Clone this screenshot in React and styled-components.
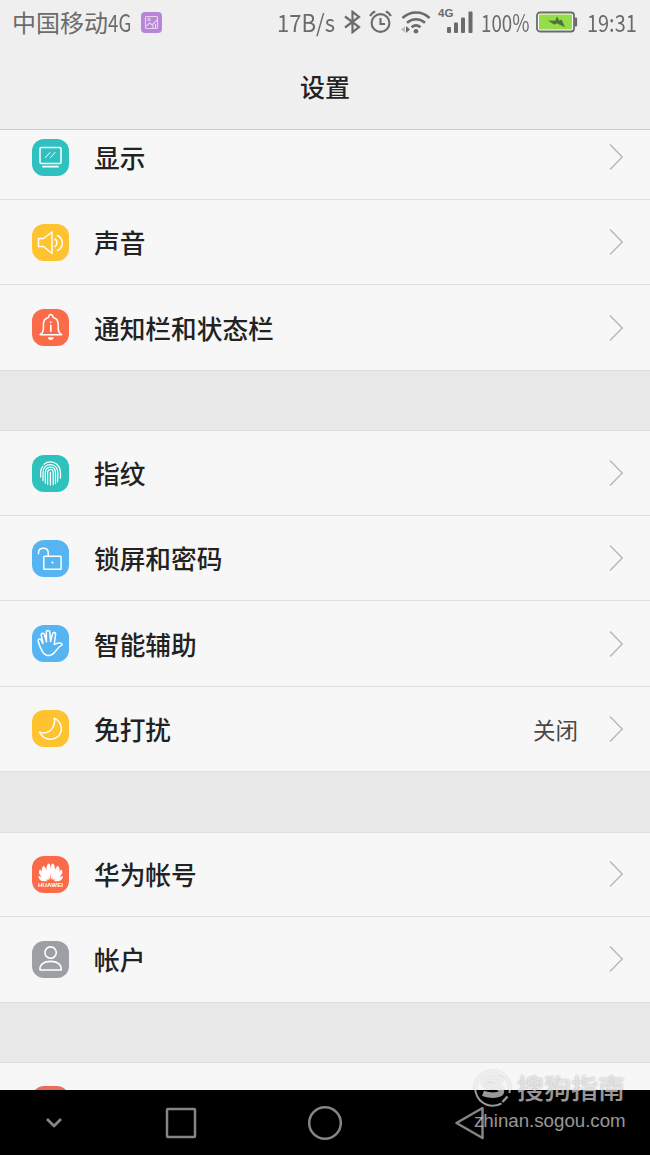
import React from "react";
import styled, { createGlobalStyle } from "styled-components";

const GlobalStyle = createGlobalStyle`
  * {
    box-sizing: border-box;
  }

  body {
    margin: 0;
    background: #000;
    font-family: "Noto Sans CJK SC", sans-serif;
  }

  svg {
    display: block;
    flex: none;
  }
`;

const Phone = styled.div`
  position: relative;
  display: flex;
  flex-direction: column;
  width: 650px;
  height: 1155px;
  overflow: hidden;
  background: #e8e8e8;
`;

const Header = styled.header`
  flex: none;
  height: 130px;
  background: #efefef;
  border-bottom: 1px solid #cbcbcb;
`;

const StatusBar = styled.div`
  display: flex;
  align-items: center;
  height: 44px;
  padding: 0 14px 0 12px;
  color: #6b6b6b;
`;

const StatusItem = styled.div`
  flex: none;
  width: ${props => props.$width}px;
  margin-left: ${props => props.$gap || 0}px;
`;

const StatusText = styled.span`
  display: block;
  width: max-content;
  font-size: 24px;
  line-height: 42px;
  white-space: nowrap;
  transform: scaleX(${props => props.$squeeze || 1});
  transform-origin: left center;
`;

const Spacer = styled.div`
  flex: 1;
`;

const Title = styled.h1`
  margin: 0;
  color: #222;
  font-size: 25px;
  font-weight: 500;
  line-height: 84px;
  text-align: center;
`;

const Viewport = styled.main`
  flex: none;
  height: 960px;
  overflow: hidden;
`;

const List = styled.div`
  display: flex;
  flex-direction: column;
  gap: 59.5px;
  margin-top: -15.4px;
`;

const Group = styled.section`
  background: #f7f7f7;
  border-top: 1px solid #dedede;
`;

const Row = styled.div`
  display: flex;
  align-items: center;
  height: 85.45px;
  padding: 0 26px 0 32px;
  border-bottom: 1px solid #dedede;

  &:first-child {
    height: 84.45px;
  }
`;

const Tile = styled.div`
  display: flex;
  flex: none;
  width: 37px;
  height: 37px;
  border-radius: 12px;
  background: ${props => props.$color};
`;

const Label = styled.span`
  flex: 1;
  margin-left: 25px;
  color: #222;
  font-size: 25.7px;
  font-weight: 500;
  line-height: 36px;
`;

const Value = styled.span`
  margin-right: 30px;
  color: #484848;
  font-size: 22.5px;
`;

const NavBar = styled.nav`
  display: grid;
  flex: none;
  grid-template-columns: 108px 145px 144px 145px 108px;
  align-items: center;
  justify-items: center;
  height: 65px;
  background: #000;
`;

const Watermark = styled.div`
  position: absolute;
  right: 24px;
  bottom: 21px;
  width: 152px;
  color: rgba(255, 255, 255, 0.6);
`;

const Brand = styled.div`
  display: flex;
  align-items: center;
  gap: 5px;
  height: 41px;
  font-size: 27px;
  font-weight: 500;
  white-space: nowrap;
  text-shadow: 0 0 2px rgba(0, 0, 0, 0.32);

  svg {
    filter: drop-shadow(0 0 1px rgba(0, 0, 0, 0.32));
  }
`;

const Site = styled.div`
  font-family: "Liberation Sans", Arial, sans-serif;
  font-size: 18.7px;
  line-height: 26px;
  white-space: nowrap;
`;

const drawings = {
  display: (
    <>
      <rect x="8" y="8.5" width="21" height="16" rx="1.3" />
      <path d="M11 27.6h15" strokeWidth="1.8" />
      <path d="M13.5 18.5l4.5-5M18.5 18.5l4.5-5" strokeWidth="1" />
    </>
  ),
  sound: (
    <>
      <path d="M6.5 14.5h5l8.5-6.5v21.5l-8.5-7h-5z" />
      <path d="M23 15c2.6 1.7 2.6 6 0 7.7M25.5 11.5c6.4 3.3 6.4 11.8 0 15" />
    </>
  ),
  bell: (
    <>
      <path d="M8 25.7h21.6c-2.6-1.7-3.4-3.3-3.4-6v-4.2c0-3.9-1.8-6.2-5.1-7-.3-2.1-1.1-3-2.3-3s-2 .9-2.3 3c-3.3.8-5.1 3.1-5.1 7v4.2c0 2.7-.8 4.3-3.4 6z" />
      <path d="M18.8 16.4v5.8" strokeWidth="1.6" />
      <circle cx="18.8" cy="13.2" r=".9" fill="#fff" stroke="none" />
      <path d="M15.9 28.3h5.8c-.2 1.8-1.4 2.7-2.9 2.7s-2.7-.9-2.9-2.7z" fill="#fff" stroke="none" />
    </>
  ),
  fingerprint: (
    <g strokeWidth="1.25">
      <path d="M12 9.3c5-4 12-2.7 15 2.6 1.8 3.4 1.7 7 1.5 11.2" />
      <path d="M8.6 22v-4.8c0-2.2.7-4.1 2.1-5.9M11 25.5v-7.8c0-5 3.1-8.2 7.5-8.2s7.3 3.5 7.3 8.2c.2 3.3 0 6-.3 9" />
      <path d="M13.3 28v-10c0-3.8 2-6 5.2-6s5 2.3 5 6v10.5" />
      <path d="M15.6 29.3V18c0-2.3 1-3.7 2.9-3.7s2.7 1.5 2.7 3.7v11.5M18.4 17.3v12.8" />
    </g>
  ),
  lock: (
    <>
      <rect x="11.8" y="16.2" width="17.3" height="13" rx=".8" />
      <path d="M16.2 16v-3c0-2.8-2-4.7-4.8-4.7-2.9 0-4.9 1.8-4.9 4.7v.7" />
      <circle cx="20.5" cy="22.6" r="1.1" fill="#fff" stroke="none" />
    </>
  ),
  hand: (
    <path
      d="M9.3 24.3C7.8 21.8 7.1 18.6 6.2 16.4c-.8-2.3 2-3.4 3-1.2l1.8 3.2-1.7-8c-.5-2.6 2.6-3.1 3.2-.7l2 7-.2-9.2c0-2.6 3.3-2.7 3.6-.1l.7 9 1.9-7.3c.6-2.5 3.5-1.9 3 .7l-1.3 9.7c1.8-.7 3.3-1.5 5-1.5 1.4 0 2.7.6 3 1.9-3.6 1.4-5.1 4.3-7.1 6.9-4.2 5.6-11.2 4.8-13.8-2.5z"
      strokeWidth="1.5"
    />
  ),
  moon: (
    <path d="M22.3 8.2c8 4.1 9.1 13.1 3.8 18.1-5.4 5.1-15 3.5-18.5-4 5 1.4 9.6-.1 12.2-3.4 2.5-3.3 3.3-6.9 2.5-10.7z" />
  ),
  huawei: (
    <>
      <g fill="#fff" stroke="none">
        <path d="M18 23.8C13.8 17.9 13.2 8.7 16.8 7.4c2.2-.4 2.4 8.4 1.2 16.4zM19.4 23.8c-1.2-8-1-16.8 1.2-16.4 3.6 1.3 3 10.5-1.2 16.4z" />
        <path d="M17 24C9.9 19.3 7.7 13 11.7 9.8c2.5 1.9 4.9 8.7 5.3 14.2zM20.4 24c.4-5.5 2.8-12.3 5.3-14.2 4 3.2 1.8 9.5-5.3 14.2z" />
        <path d="M16.2 24.3C8.6 21.8 5.4 17.4 7.8 13.6c3.4 2.2 6.8 6.2 8.4 10.7zM21.2 24.3c1.6-4.5 5-8.5 8.4-10.7 2.4 3.8-.8 8.2-8.4 10.7zM15.5 24.9c-5.5 1.4-8.7-.4-9.2-5 3.7.8 6.8 2.5 9.2 5zM21.9 24.9c2.4-2.5 5.5-4.2 9.2-5-.5 4.6-3.7 6.4-9.2 5z" />
      </g>
      <text x="18.6" y="30.8" textAnchor="middle" textLength="25" lengthAdjust="spacingAndGlyphs" fill="#fff" stroke="none" fontFamily="Liberation Sans, sans-serif" fontSize="5" fontWeight="700">HUAWEI</text>
    </>
  ),
  account: (
    <g strokeWidth="1.6">
      <circle cx="18.6" cy="11.6" r="5.7" />
      <path d="M8 29c-.5-5.5 3.7-8.6 10.6-8.6S29.7 23.5 29.2 29z" />
    </g>
  )
};

const groups = [
  [
    { label: "显示", icon: "display", color: "#2fc1c0" },
    { label: "声音", icon: "sound", color: "#ffc32f" },
    { label: "通知栏和状态栏", icon: "bell", color: "#fb6a49" }
  ],
  [
    { label: "指纹", icon: "fingerprint", color: "#2fc1bb" },
    { label: "锁屏和密码", icon: "lock", color: "#56b4f3" },
    { label: "智能辅助", icon: "hand", color: "#56b4f3" },
    { label: "免打扰", icon: "moon", color: "#ffc32f", value: "关闭" }
  ],
  [
    { label: "华为帐号", icon: "huawei", color: "#fb6a49" },
    { label: "帐户", icon: "account", color: "#9c9fa3" }
  ],
  [{ label: "", color: "#e96d57" }]
];

function SettingRow({ item }) {
  return (
    <Row>
      <Tile $color={item.color}>
        <svg width="37" height="37" viewBox="0 0 37 37" fill="none" stroke="#fff" strokeWidth="1.5" strokeLinejoin="round" strokeLinecap="round">
          {drawings[item.icon]}
        </svg>
      </Tile>
      <Label>{item.label}</Label>
      {item.value && <Value>{item.value}</Value>}
      <svg width="16" height="28" viewBox="0 0 16 28" fill="none" stroke="#b9b9b9" strokeWidth="1.5">
        <path d="M2 1.5L14.2 14 2 26.5" />
      </svg>
    </Row>
  );
}

function Status() {
  return (
    <StatusBar>
      <StatusItem $width={96}>
        <StatusText>中国移动</StatusText>
      </StatusItem>
      <StatusItem $width={23}>
        <StatusText $squeeze={0.78}>4G</StatusText>
      </StatusItem>
      <StatusItem $width={21} $gap={10}>
        <svg width="21" height="21" viewBox="0 0 21 21" fill="none" stroke="#e6d3f1" strokeWidth="1.1">
          <rect width="21" height="21" rx="4" fill="#b886d8" stroke="none" />
          <rect x="4.5" y="4.5" width="12" height="12" rx="1" />
          <path d="M5 14l4-3 2 2 5-5M12 16v-3M14.5 16v-4" />
          <circle cx="8" cy="7.5" r="1.2" />
        </svg>
      </StatusItem>
      <Spacer />
      <StatusItem $width={57}>
        <StatusText $squeeze={0.92}>17B/s</StatusText>
      </StatusItem>
      <StatusItem $width={18} $gap={9}>
        <svg width="18" height="24" viewBox="0 0 18 24" fill="none" stroke="#6b6b6b" strokeWidth="2.2">
          <path d="M2 6.5l14 10.5-6.5 5.2V1.8L16 7 2 17.5" />
        </svg>
      </StatusItem>
      <StatusItem $width={23} $gap={8}>
        <svg width="23" height="24" viewBox="0 0 23 24" fill="none" stroke="#6b6b6b" strokeWidth="2.1">
          <circle cx="11.5" cy="13" r="8.9" />
          <path d="M11.5 8v6h4.5M1.2 6.2c1-2.5 2.6-4 5-4.8M21.8 6.2c-1-2.5-2.6-4-5-4.8" />
        </svg>
      </StatusItem>
      <StatusItem $width={31} $gap={8}>
        <svg width="31" height="24" viewBox="0 0 31 24" fill="none" stroke="#6b6b6b" strokeWidth="2.6">
          <path d="M2.5 8c8-7.4 19.5-7.4 27 0M7 12.8c5.4-4.8 12.6-4.8 18 0M11.5 17.2c2.8-2.3 6.3-2.3 9 0" />
          <circle cx="16" cy="21.2" r="2.3" fill="#6b6b6b" stroke="none" />
          <path d="M5 16.5v6l-4-3z" fill="#bbb" stroke="none" />
          <path d="M6 16v7l4-3.5z" fill="#6b6b6b" stroke="none" />
        </svg>
      </StatusItem>
      <StatusItem $width={36} $gap={7}>
        <svg width="36" height="30" viewBox="0 0 36 30" fill="#6b6b6b">
          <text x="0" y="9.5" fontFamily="Liberation Sans, sans-serif" fontSize="11.5" fontWeight="700">4G</text>
          <rect x="9" y="20" width="4" height="6" rx="1" />
          <rect x="16" y="15.5" width="4" height="10.5" rx="1" />
          <rect x="23" y="10.5" width="4" height="15.5" rx="1" />
          <rect x="30.5" y="4.5" width="4" height="21.5" rx="1" />
        </svg>
      </StatusItem>
      <StatusItem $width={48} $gap={7}>
        <StatusText $squeeze={0.78}>100%</StatusText>
      </StatusItem>
      <StatusItem $width={42} $gap={7}>
        <svg width="42" height="22" viewBox="0 0 42 22">
          <rect x="1" y="1.5" width="37" height="19" rx="3" fill="#fff" stroke="#6b6b6b" strokeWidth="1.8" />
          <rect x="3" y="3.5" width="33" height="15" rx="1" fill="#94dc48" />
          <rect x="38.5" y="6.5" width="2.6" height="9" rx="1" fill="#6b6b6b" />
          <path d="M21 5.5l2.3 4.2 2.2-1.2 3.5 7.8-8.3-4-2.2 1.5-6.5-4.4 7.2.4z" fill="#50703c" />
        </svg>
      </StatusItem>
      <StatusItem $width={49} $gap={9}>
        <StatusText $squeeze={0.83}>19:31</StatusText>
      </StatusItem>
    </StatusBar>
  );
}

function Navigation() {
  const line = { fill: "none", stroke: "#858585", strokeWidth: 2.5, strokeLinejoin: "round" };

  return (
    <NavBar>
      <svg width="18" height="12" {...line} strokeWidth="2.8">
        <path d="M2 2l7 7 7-7" />
      </svg>
      <svg width="32" height="32" {...line}>
        <rect x="2" y="2" width="28" height="28" rx="1" />
      </svg>
      <svg width="36" height="36" {...line}>
        <circle cx="18" cy="18" r="15.8" />
      </svg>
      <svg width="32" height="34" {...line}>
        <path d="M2.5 17L28.5 2v30z" />
      </svg>
    </NavBar>
  );
}

export default function App() {
  return (
    <>
      <GlobalStyle />
      <Phone>
        <Header>
          <Status />
          <Title>设置</Title>
        </Header>
        <Viewport>
          <List>
            {groups.map((items, index) => (
              <Group key={index}>
                {items.map(item => (
                  <SettingRow key={item.label} item={item} />
                ))}
              </Group>
            ))}
          </List>
        </Viewport>
        <Navigation />
        <Watermark>
          <Brand>
            <svg width="38" height="40" viewBox="0 0 38 40" fill="none" stroke="rgba(255, 255, 255, 0.6)">
              <path d="M27.5 35.3A17.3 17.3 0 1 1 35.3 25" strokeWidth="2" />
              <path d="M28.5 12.2c-6-2.2-18-2.4-18 2.3 0 5.2 17 3 17 8.6 0 5-11 4.9-18.5 2.2" strokeWidth="5.5" />
              <path d="M33.5 28.5l-5 5.5" strokeWidth="2.4" />
            </svg>
            搜狗指南
          </Brand>
          <Site>zhinan.sogou.com</Site>
        </Watermark>
      </Phone>
    </>
  );
}
